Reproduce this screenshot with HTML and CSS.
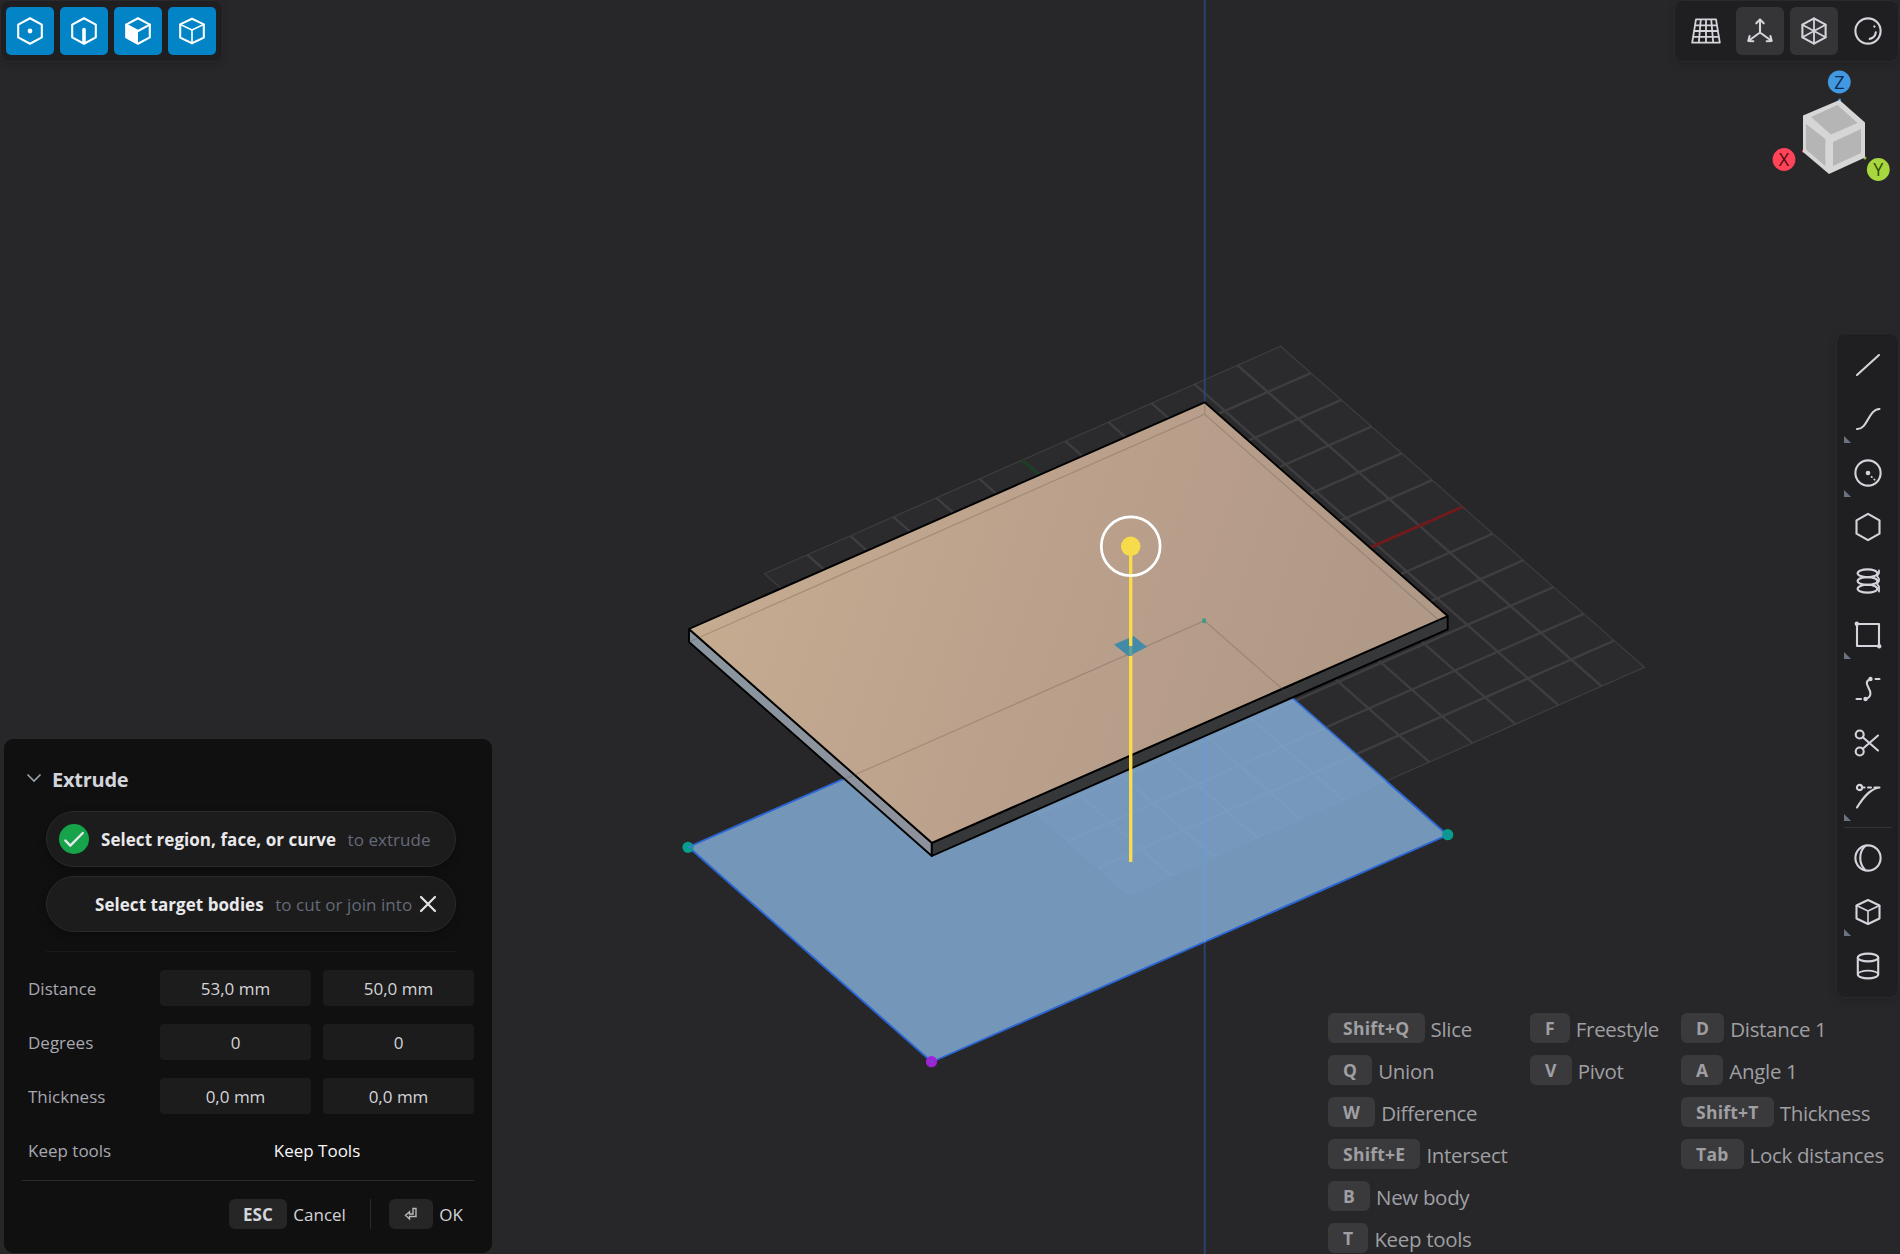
FILE: index.html
```html
<!DOCTYPE html>
<html lang="en">
<head>
<meta charset="utf-8">
<title>Extrude</title>
<link rel="stylesheet" href="styles.css">
</head>
<body>
<svg class="scene" width="1900" height="1254" viewBox="0 0 1900 1254">
  <defs>
    <linearGradient id="topFace" gradientUnits="userSpaceOnUse" x1="720" y1="560" x2="1330" y2="760">
      <stop offset="0" stop-color="#c5ab90"/><stop offset=".5" stop-color="#bba18c"/><stop offset="1" stop-color="#b19987"/>
    </linearGradient>
    <linearGradient id="sideFace" gradientUnits="userSpaceOnUse" x1="689" y1="635" x2="932" y2="850">
      <stop offset="0" stop-color="#8a969f"/><stop offset="1" stop-color="#8d919c"/>
    </linearGradient>
    <clipPath id="sketchClip"><path d="M688.5 847 L931.8 1062 L1447.5 835 L1204.5 620.5Z"/></clipPath>
    <g id="grid" transform="matrix(43.02 -18.95 30.33 26.75 764.3 573.7)">
      <path class="major" d="M1 0V12M2 0V12M3 0V12M4 0V12M5 0V12M6 0V12M7 0V12M8 0V12M9 0V12M10 0V12M11 0V12M0 1H12M0 2H12M0 3H12M0 4H12M0 5H12M0 6H12M0 7H12M0 8H12M0 9H12M0 10H12M0 11H12"/>
      <path class="rim" d="M0 0H12V12H0Z"/>
    </g>
  </defs>
  <path fill="#2b2b2d" d="M764.3 573.7L1280.5 346.3L1644.5 667.3L1128.3 894.7Z"/>
  <use href="#grid" stroke="#3e3e40"/>
  <path stroke="#184020" stroke-width="2.8" d="M1022 460.3L1204.5 620.5"/>
  <path stroke="#701a1c" stroke-width="3" d="M1462.5 507L1204.5 620.5"/>
  <path stroke="#294377" stroke-width="1.8" d="M1204.7 0V1254"/>
  <path fill="#7497b9" stroke="#2a66d4" stroke-width="1.9" d="M688.5 847L931.8 1062L1447.5 835L1204.5 620.5Z"/>
  <g clip-path="url(#sketchClip)">
    <path fill="#78a0cc" fill-opacity=".18" d="M764.3 573.7L1280.5 346.3L1644.5 667.3L1128.3 894.7Z"/>
    <use href="#grid" stroke="#8db0d6" stroke-opacity=".16"/>
    <path stroke="#6c9ad6" stroke-width="1.6" d="M1204.7 700V942"/>
  </g>
  <circle cx="688" cy="847.3" r="5.6" fill="#059d8c"/><path d="M688 847.5l6-1.5" stroke="#3b82c4" stroke-width="2"/>
  <circle cx="1447.7" cy="834.7" r="5.6" fill="#059d8c"/><circle cx="1447" cy="835" r="2.2" fill="#1c88a8"/>
  <circle cx="931.5" cy="1061.7" r="5.6" fill="#9d22d8"/><circle cx="931.5" cy="1061.5" r="2" fill="#8238c8"/>
  <g stroke="#000" stroke-width="1.9" stroke-linejoin="round">
    <path fill="url(#sideFace)" d="M689 629L931.8 842.8V856L689 642Z"/>
    <path fill="#353739" d="M931.8 842.8L1447.7 616V629.3L931.8 856Z"/>
    <path fill="url(#topFace)" d="M689 629L1204.7 402.3L1447.7 616L931.8 842.8Z"/>
  </g>
  <path fill="none" stroke="#5b4a40" stroke-opacity=".28" stroke-width="1.2" d="M689 642L1204.7 414.3L1442 623M1204.7 403V414.3M843 780L1204.5 620.7L1288 694"/>
  <path fill="#3e9a86" d="M1202.3 618.5h3.6v4.6h-3.6z"/>
  <path fill="#418ba8" d="M1114 644.5L1133.5 636L1147 647L1128.5 656.3Z"/>
  <path stroke="#fbdb49" stroke-width="3.4" d="M1130.7 547V646M1130.7 656V862"/>
  <path stroke="#5fa093" stroke-width="3.4" d="M1130.7 646V655.5"/>
  <circle cx="1130.7" cy="546.3" r="29.4" fill="none" stroke="#fff" stroke-width="2.8"/>
  <circle cx="1130.7" cy="546.3" r="9.7" fill="#f8db4a"/>
</svg>

<main class="ui">
  <div class="bar bar-modes">
    <button class="tool on"><svg viewBox="0 0 32 32"><path d="M16 3.3L27.8 9.6V22.4L16 28.7L4.2 22.4V9.6Z"/><circle cx="16" cy="16" r="2.4" class="solid"/></svg></button>
    <button class="tool on"><svg viewBox="0 0 32 32"><path d="M16 3.3L27.8 9.6V22.4L16 28.7L4.2 22.4V9.6Z"/><path d="M16 14.5V27.500" class="w3"/></svg></button>
    <button class="tool on"><svg viewBox="0 0 32 32"><path d="M16 3.3L27.8 9.6V22.4L16 28.7L4.2 22.4V9.6Z"/><path d="M4.2 9.6L16 16L27.8 9.6"/><path class="solid" d="M4.2 9.6L16 16V28.7L4.2 22.4Z"/></svg></button>
    <button class="tool on"><svg viewBox="0 0 32 32"><path d="M16 3.8L27.8 9.4V22.6L16 28.2L4.2 22.6V9.4Z"/><path class="w15" d="M4.2 9.4L16 15L27.8 9.4M16 15V28"/></svg></button>
  </div>

  <div class="right">
    <div class="bar bar-view">
      <button class="tool"><svg viewBox="0 0 32 32"><path class="w18" d="M6 4.3H26L29.8 27.7H2.2ZM4.9 10.3H27.1M4 16H28M3 21.8H29M10.8 4.3L8.8 27.7M16 4.3V27.7M21.2 4.3L23.2 27.7"/></svg></button>
      <button class="tool lit"><svg viewBox="0 0 32 32"><path d="M16 17.5V5M16 17.5L5 25.5M16 17.5L27 25.5M12.3 8.3L16 4.4L19.7 8.3M9.3 26.2L4.3 25.9L5.6 21M22.7 26.2L27.7 25.9L26.4 21"/></svg></button>
      <button class="tool lit"><svg viewBox="0 0 32 32"><path d="M16 3.3L27.6 9.6V22.4L16 28.7L4.4 22.4V9.6Z"/><path class="w18" d="M16 3.5V28.5M4.4 9.8L27.6 22.2M27.6 9.8L4.4 22.2"/></svg></button>
      <button class="tool"><svg viewBox="0 0 32 32"><circle cx="16" cy="16" r="12.6"/><path d="M23.8 17.2C23.5 20.7 21 23.3 17.7 23.9M22.3 11.4L22.5 11.7"/></svg></button>
    </div>
    <svg class="viewcube" width="116" height="130" viewBox="1784 62 116 130">
      <circle cx="1839.3" cy="82" r="11.4" class="bz"/><circle cx="1784" cy="159.5" r="11.4" class="bx"/><circle cx="1878.3" cy="169.5" r="11.4" class="by"/>
      <text x="1839.3" y="88.6" class="tz">Z</text><text x="1784" y="166" class="tx">X</text><text x="1878.3" y="176" class="ty">Y</text>
      <circle cx="1839.6" cy="100" r="1.5" fill="#4299e1"/><circle cx="1803.4" cy="151" r="1.5" fill="#ff4757"/><circle cx="1865" cy="158" r="1.5" fill="#8fc031"/>
      <path fill="#d6d6d6" d="M1839.5 100L1865 122.5V157.5L1829 174L1803 152V115.5Z"/>
      <g fill="#b5b5b5"><path d="M1811 117L1837.5 105L1857.5 123L1831 134.5Z"/><path d="M1806 124L1825.3 139V166L1806 149.5Z"/><path d="M1833 142L1861 129V153L1833 166Z"/></g>
    </svg>
  </div>

  <nav class="side">
    <button class="tool"><svg viewBox="0 0 32 32"><path d="M5 26L27 6"/></svg></button>
    <button class="tool more"><svg viewBox="0 0 32 32"><path d="M5 26C16 26.500 16 6.500 27.500 6"/></svg></button>
    <button class="tool more"><svg viewBox="0 0 32 32"><circle cx="16" cy="16" r="12.6"/><circle cx="16" cy="16" r="2.3" class="solid"/><path class="w18" d="M19.600 19.800L19.900 20.100M22.300 22.400L22.600 22.700"/></svg></button>
    <button class="tool"><svg viewBox="0 0 32 32"><path d="M16 2.800L27.500 9.300V22.700L16 29.200L4.500 22.700V9.300Z"/></svg></button>
    <button class="tool"><svg viewBox="0 0 32 32"><ellipse cx="15.500" cy="8.300" rx="9.900" ry="3.900"/><ellipse cx="15.500" cy="16" rx="9.900" ry="3.900"/><ellipse cx="15.500" cy="23.700" rx="9.900" ry="3.900"/><path class="w18" d="M27 5.500V8L25 11L27 14V16L25 19L27 21.500V26.500"/></svg></button>
    <button class="tool more"><svg viewBox="0 0 32 32"><path d="M5 5H27V27H5Z"/><circle cx="4.800" cy="4.800" r="2.200" class="solid"/><circle cx="27.200" cy="27.200" r="2.200" class="solid"/></svg></button>
    <button class="tool"><svg viewBox="0 0 32 32"><path d="M18.500 6C8.500 10 22.500 17.500 17.500 23.500C16.500 25 15 26 13.500 26"/><circle cx="18.500" cy="6" r="2.200" class="solid"/><circle cx="13.500" cy="26" r="2.200" class="solid"/><path d="M23.500 6H27.500M4.500 26H9"/></svg></button>
    <button class="tool"><svg viewBox="0 0 32 32"><circle cx="7.700" cy="7.500" r="4"/><circle cx="7.700" cy="24.500" r="4"/><path d="M10.800 10.200L26 23.500M10.800 21.800L26 8.500"/></svg></button>
    <button class="tool more"><svg viewBox="0 0 32 32"><circle cx="7.500" cy="6.500" r="2.600"/><path d="M11 6.500H12.500M16 6.500H19M5 26.500C11 17 18 7.500 27.500 6.500H22.500"/></svg></button>
    <hr>
    <button class="tool"><svg viewBox="0 0 32 32"><circle cx="16" cy="16" r="12.600"/><path d="M13.500 3.800C6.500 10 6.500 22 13.500 28.200"/></svg></button>
    <button class="tool more"><svg viewBox="0 0 32 32"><path d="M16 4L27.500 9.500V22.500L16 28L4.500 22.500V9.500Z"/><path class="w15" d="M4.500 9.500L16 15L27.500 9.500M16 15V28"/></svg></button>
    <button class="tool"><svg viewBox="0 0 32 32"><ellipse cx="16" cy="7.500" rx="10.200" ry="3.900"/><path d="M5.800 7.500V24.500C5.800 26.700 10.400 28.400 16 28.400S26.200 26.700 26.200 24.500V7.500"/><path class="w15" d="M5.800 24.500C5.800 22.300 10.400 20.600 16 20.600S26.200 22.300 26.200 24.500"/></svg></button>
  </nav>

  <section class="panel">
    <h1><svg width="16" height="10" viewBox="0 0 16 10"><path d="M1.500 1.500L8 8L14.500 1.500"/></svg>Extrude</h1>
    <div class="prompts">
      <div class="pill"><svg class="check" width="30" height="30" viewBox="0 0 30 30"><circle cx="15" cy="15" r="15"/><path d="M6.300 16.500L11.300 21.700L23.800 9"/></svg><b>Select region, face, or curve</b><span>to extrude</span></div>
      <div class="pill second"><b>Select target bodies</b><span>to cut or join into</span><svg class="close" width="18" height="18" viewBox="0 0 18 18"><path d="M2 2L16 16M16 2L2 16"/></svg></div>
    </div>
    <div class="fields">
      <label>Distance</label><div class="input">53,0 mm</div><div class="input">50,0 mm</div>
      <label>Degrees</label><div class="input">0</div><div class="input">0</div>
      <label>Thickness</label><div class="input">0,0 mm</div><div class="input">0,0 mm</div>
      <label>Keep tools</label><div class="toggle">Keep Tools</div>
    </div>
    <footer>
      <kbd>ESC</kbd><span>Cancel</span><i></i><kbd class="enter"><svg width="14" height="14" viewBox="0 0 14 14"><path d="M9 1.500H12V9.500H5.500V12L1.500 8.300L5.500 4.800V7H9Z"/></svg></kbd><span>OK</span>
    </footer>
  </section>

  <section class="keys">
    <ul>
      <li><kbd>Shift+Q</kbd><span>Slice</span></li>
      <li><kbd>Q</kbd><span>Union</span></li>
      <li><kbd>W</kbd><span>Difference</span></li>
      <li><kbd>Shift+E</kbd><span>Intersect</span></li>
      <li><kbd>B</kbd><span>New body</span></li>
      <li><kbd>T</kbd><span>Keep tools</span></li>
    </ul>
    <ul>
      <li><kbd>F</kbd><span>Freestyle</span></li>
      <li><kbd>V</kbd><span>Pivot</span></li>
    </ul>
    <ul>
      <li><kbd>D</kbd><span>Distance 1</span></li>
      <li><kbd>A</kbd><span>Angle 1</span></li>
      <li><kbd>Shift+T</kbd><span>Thickness</span></li>
      <li><kbd>Tab</kbd><span>Lock distances</span></li>
    </ul>
  </section>
</main>
</body>
</html>
```
FILE: styles.css
```css
* { box-sizing: border-box; margin: 0; padding: 0; }

body {
  position: relative;
  width: 1900px;
  height: 1254px;
  overflow: hidden;
  background: #272729;
  color: #d4d4d8;
  font-family: "Open Sans", "Noto Sans", sans-serif;
  font-size: 17px;
}

.scene { position: absolute; inset: 0; display: block; }
.scene #grid path { fill: none; vector-effect: non-scaling-stroke; }
.scene .major { stroke-width: 2.4; }
.scene .rim { stroke-width: 1.2; }

.ui { position: relative; display: grid; height: 1254px; }
.ui > * { grid-area: 1 / 1; }

/* toolbars */
.bar, .side {
  display: flex;
  gap: 6px;
  background: #1f1f21;
  border: 1px solid #2a2a2c;
  border-radius: 9px;
  box-shadow: 0 3px 10px rgba(0, 0, 0, .14);
}
.bar { height: 62px; padding: 6px 5px; }
.bar-modes { justify-self: start; align-self: start; width: 223px; }
.right { justify-self: end; align-self: start; display: flex; flex-direction: column; align-items: flex-end; }
.bar-view { width: 225px; padding-left: 7px; margin-right: 1px; }

.tool {
  position: relative;
  flex: none;
  display: grid;
  place-items: center;
  width: 48px;
  height: 48px;
  border: 0;
  border-radius: 6px;
  background: none;
  color: #d4d4dc;
}
.tool.on { background: #0284c7; color: #fff; border-radius: 5px; }
.tool.lit { background: #353537; }
.tool svg { width: 32px; height: 32px; fill: none; stroke: currentColor; stroke-width: 2.1; stroke-linecap: round; stroke-linejoin: round; }
.tool .solid { fill: currentColor; stroke: none; }
.tool .w3 { stroke-width: 3.6; }
.tool .w18 { stroke-width: 1.8; }
.tool .w15 { stroke-width: 1.6; }

.side {
  justify-self: end;
  align-self: start;
  flex-direction: column;
  width: 63px;
  height: 665px;
  margin: 333px 1px 0 0;
  padding: 7px 6px 6px 7px;
}
.side hr { flex: none; border: 0; height: 1px; background: #353538; }
.more::after {
  content: "";
  position: absolute;
  left: 0;
  bottom: 0;
  width: 7px;
  height: 7px;
  background: #6b7280;
  clip-path: polygon(0 0, 100% 100%, 0 100%);
}

.viewcube { overflow: visible; font-family: "Open Sans", sans-serif; font-size: 18px; text-anchor: middle; }
.bz { fill: #4299e1; }
.bx { fill: #ff4459; }
.by { fill: #a8d63f; }
.tz { fill: #0b2c55; }
.tx { fill: #4a0810; }
.ty { fill: #2d4a08; }

/* extrude panel */
.panel {
  justify-self: start;
  align-self: start;
  width: 488px;
  height: 514px;
  margin: 739px 0 0 4px;
  padding: 22px 18px 0;
  background: #101010;
  border-radius: 9px;
}
.panel h1 { display: flex; align-items: center; gap: 10px; height: 36px; padding-left: 4px; font-size: 20px; letter-spacing: -.25px; color: #d4d4dc; }
.panel h1 svg { fill: none; stroke: #9ca3af; stroke-width: 1.6; margin-top: -3px; }
.prompts { display: flex; flex-direction: column; gap: 9px; margin: 14px 18px 0 24px; padding-bottom: 19px; border-bottom: 1px solid #181a20; }
.pill {
  display: flex;
  align-items: center;
  height: 56px;
  padding-left: 12px;
  border: 1px solid #2a2a2b;
  border-radius: 28px;
  background: #1c1c1c;
  box-shadow: 0 3px 8px rgba(0, 0, 0, .3);
  white-space: nowrap;
}
.pill b { color: #e9e9ec; margin-left: 12px; letter-spacing: .05px; }
.pill span { color: #656979; margin-left: 11.500px; letter-spacing: .05px; }
.second { padding-left: 36px; }
.check circle { fill: #16a34a; }
.check path { fill: none; stroke: #e8eaec; stroke-width: 2.4; stroke-linecap: round; stroke-linejoin: round; }
.close { margin-left: 7px; stroke: #e5e5e8; stroke-width: 2.2; stroke-linecap: round; }

.fields { display: grid; grid-template-columns: 126px 151px 151px; gap: 18px 12px; grid-auto-rows: 36px; align-items: center; margin-top: 18px; color: #d4d4d8; }
.fields label { justify-self: start; padding-left: 6px; color: #a8a8b0; }
.input { display: grid; place-items: center; height: 36px; border-radius: 4px; background: #1c1c1c; }
.toggle { grid-column: 2 / 4; text-align: center; color: #f8f8f9; }

kbd { display: inline-grid; place-items: center; height: 30px; padding: 0 14.5px; border-radius: 6px; font: bold 17.5px "Open Sans", "Noto Sans", sans-serif; }
footer { display: flex; justify-content: flex-end; align-items: center; height: 68px; margin-top: 12px; padding: 0 11px 1px 0; border-top: 1px solid #2a2a2a; }
footer kbd { font-size: 17px; background: #262626; color: #d4d4dc; }
footer span { margin-left: 6px; }
footer i { width: 1px; height: 30px; margin: 0 18px 0 24.500px; background: #2a2a2a; }
footer .enter { width: 44px; }
.enter svg { fill: none; stroke: #b9b9bd; stroke-width: 1.4; }

/* shortcut hints */
.keys { align-self: start; justify-self: start; display: grid; grid-template-columns: 202px 151px auto; margin: 1013px 0 0 1328px; height: 241px; color: #9f9fa3; font-size: 20.500px; letter-spacing: -.32px; }
.keys ul { display: flex; flex-direction: column; gap: 12px; list-style: none; }
.keys li { display: flex; align-items: center; gap: 6px; height: 30px; white-space: nowrap; }
.keys span { padding-top: 1px; }
.keys kbd { padding: 0 15px; background: #3a3a3c; letter-spacing: .25px; }
```
